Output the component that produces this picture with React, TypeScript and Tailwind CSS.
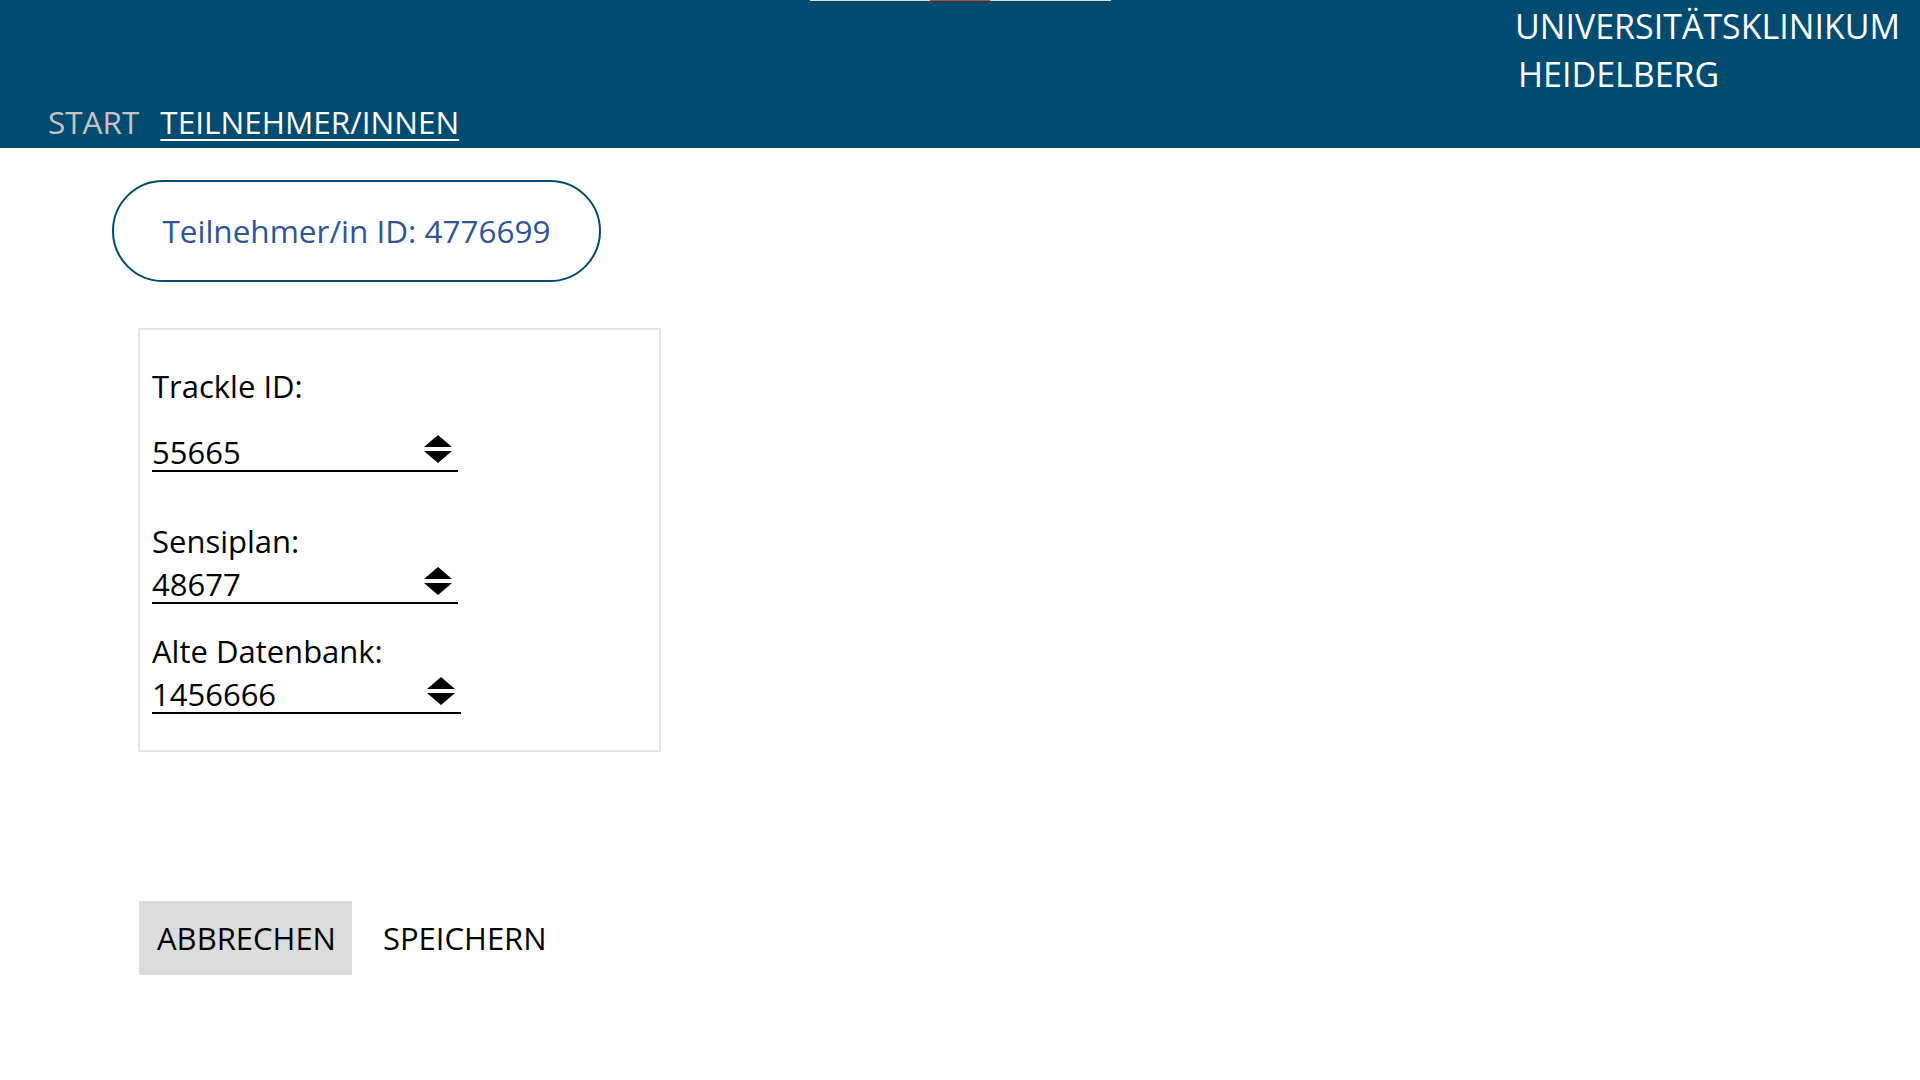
const font = { fontFamily: '"Open Sans", "Noto Sans", sans-serif' }

function Spinner() {
  return (
    <svg width="28" height="28" viewBox="0 0 28 28" className="shrink-0">
      <polygon points="14,0 28,12 0,12" fill="#000" />
      <polygon points="0,16 28,16 14,28" fill="#000" />
    </svg>
  )
}

function NumberField({ value, width }: { value: string; width: string }) {
  return (
    <div className={`flex items-start justify-between border-b-2 border-black ${width}`}>
      <span className="text-[31px] leading-[36px] text-black">{value}</span>
      <div className="mr-[6px] mt-[1px]">
        <Spinner />
      </div>
    </div>
  )
}

export default function App() {
  return (
    <div className="min-h-screen bg-white" style={font}>
      <header className="relative h-[148px] bg-[#004b70] flex">
        <div className="absolute top-0 left-0 right-0 flex justify-center">
          <div className="flex h-px w-[301px]">
            <div className="w-[120px] bg-[#dcdcdc]" />
            <div className="w-[60px] bg-[#c8422b]" />
            <div className="w-[121px] bg-[#dcdcdc]" />
          </div>
        </div>

        <nav className="flex items-end pb-[8px] pl-[48px] gap-[21px] text-[31.5px] leading-[36px]">
          <a className="text-[#c4c4c4]">START</a>
          <a className="text-white underline decoration-2 underline-offset-[5px]">TEILNEHMER/INNEN</a>
        </nav>

        <div className="ml-auto w-[405px] pt-[2px] text-white text-[34px] leading-[48px]">
          <div>UNIVERSITÄTSKLINIKUM</div>
          <div className="pl-[3px]">HEIDELBERG</div>
        </div>
      </header>

      <main>
        <div className="ml-[112px] mt-[32px] flex h-[102px] w-[489px] items-center justify-center rounded-full border-2 border-[#004b70]">
          <span className="text-[31.5px] text-[#2f5597]">Teilnehmer/in ID: 4776699</span>
        </div>

        <section className="ml-[138px] mt-[46px] h-[424px] w-[523px] border-2 border-[#e3e3e3] pl-[12px] pt-[37px]">
          <div className="text-[31px] leading-[38px] text-black">Trackle ID:</div>
          <div className="mt-[29px]">
            <NumberField value="55665" width="w-[306px]" />
          </div>

          <div className="mt-[50px] text-[31px] leading-[38px] text-black">Sensiplan:</div>
          <div className="mt-[6px]">
            <NumberField value="48677" width="w-[306px]" />
          </div>

          <div className="mt-[28px] text-[31px] leading-[38px] text-black">Alte Datenbank:</div>
          <div className="mt-[6px]">
            <NumberField value="1456666" width="w-[309px]" />
          </div>
        </section>

        <div className="ml-[139px] mt-[149px] flex">
          <button className="flex h-[74px] items-center bg-[#dcdcdc] pl-[18px] pr-[16px] text-[31px] text-black">
            ABBRECHEN
          </button>
          <button className="ml-[13px] flex h-[74px] items-center pl-[18px] pr-[16px] text-[31px] text-black">
            SPEICHERN
          </button>
        </div>
      </main>
    </div>
  )
}
